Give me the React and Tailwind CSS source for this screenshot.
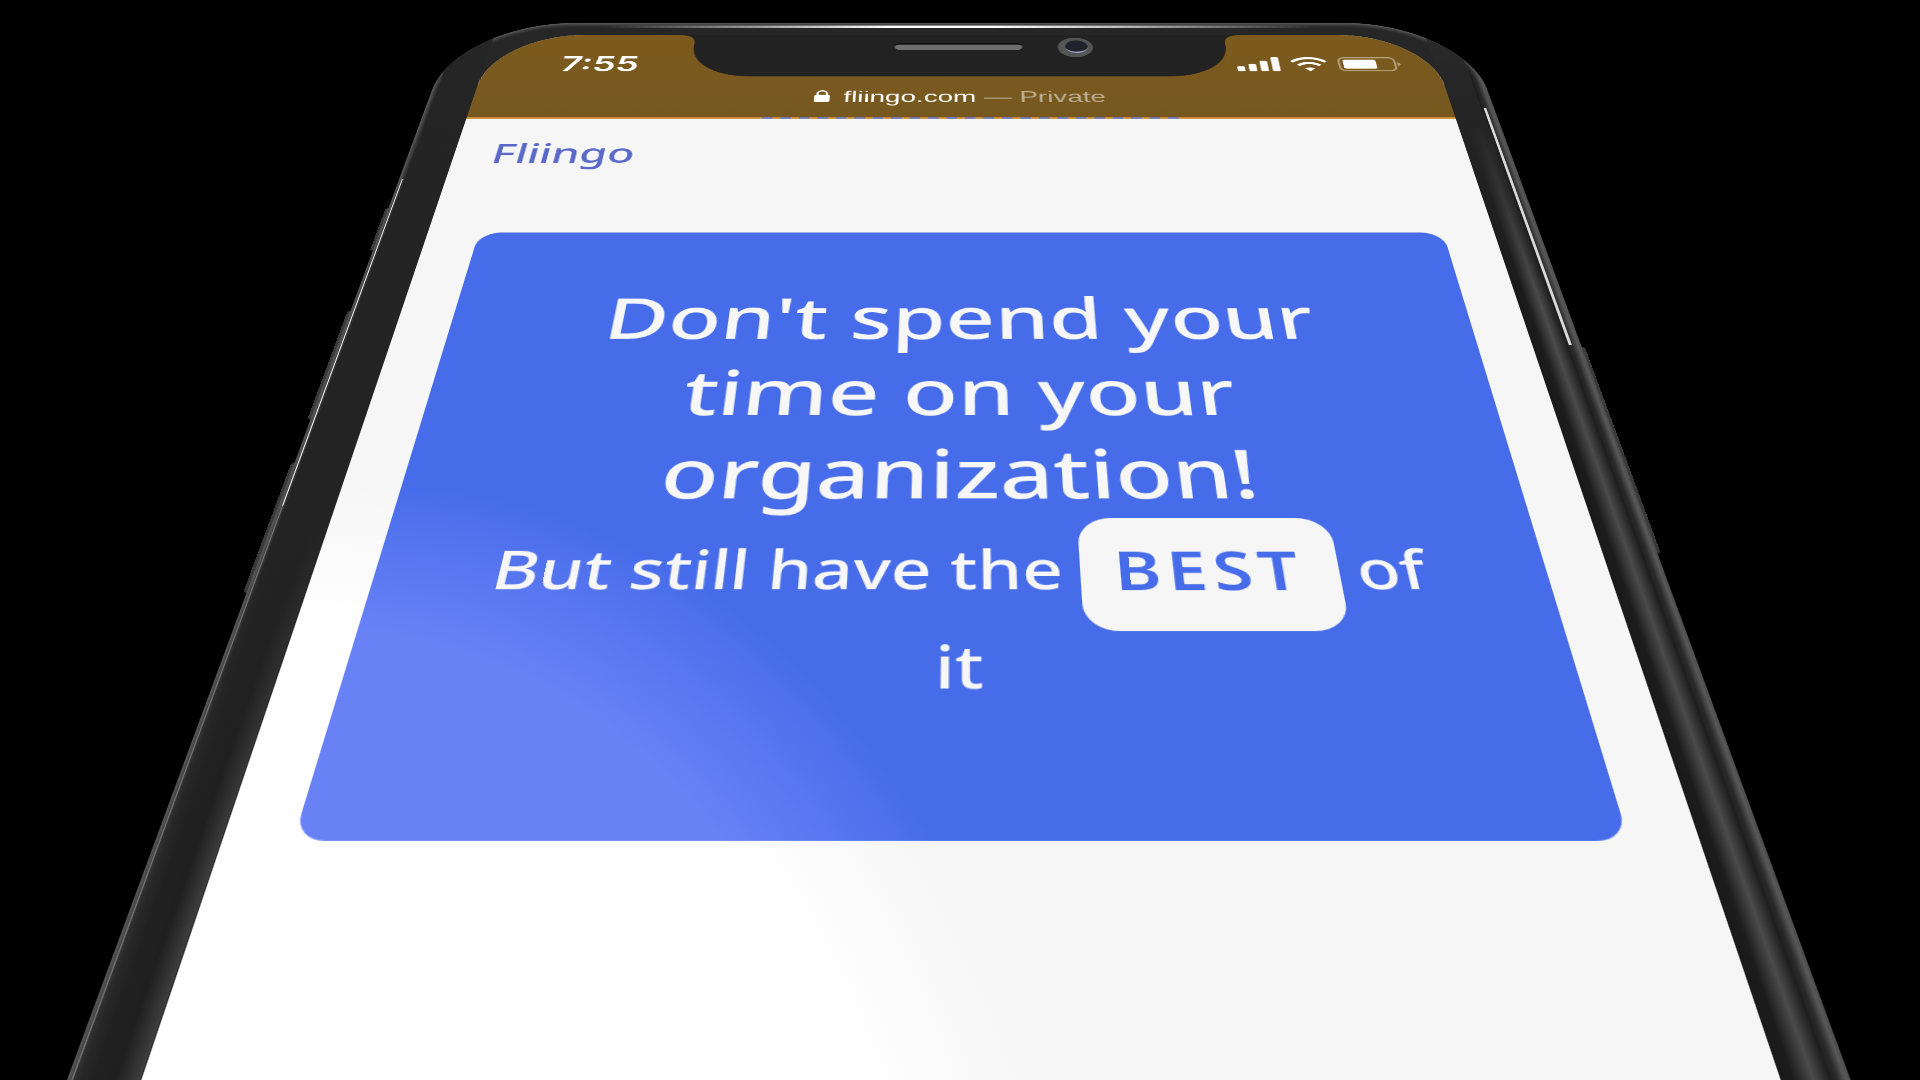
import React from 'react';

// status bar icons
function SignalIcon() {
  return (
    <svg width="17" height="10" viewBox="0 0 17 10" fill="#fff">
      <rect x="0" y="6.4" width="3" height="3.6" rx="0.7" />
      <rect x="4.6" y="4.8" width="3" height="5.2" rx="0.7" />
      <rect x="9.2" y="2.6" width="3" height="7.4" rx="0.7" />
      <rect x="13.8" y="0" width="3" height="10" rx="0.7" />
    </svg>
  );
}

function WifiIcon() {
  return (
    <svg width="15" height="10" viewBox="0 0 15 10" fill="none" stroke="#fff" strokeWidth="1.5">
      <path d="M0.8 3.4 A9.6 9.6 0 0 1 14.2 3.4" />
      <path d="M3.2 5.9 A6.2 6.2 0 0 1 11.8 5.9" />
      <path d="M5.5 7.9 Q7.5 6.7 9.5 7.9 L7.5 10 Z" fill="#fff" stroke="none" />
    </svg>
  );
}

function BatteryIcon() {
  return (
    <svg width="25" height="10" viewBox="0 0 25 10" fill="none">
      <rect x="0.4" y="0.4" width="22" height="9.2" rx="2.4" stroke="#b5a27c" strokeWidth="0.8" />
      <rect x="2" y="1.8" width="13" height="6.4" rx="1" fill="#fff" />
      <path d="M23.4 3.6 L24.8 5 L23.4 6.4 Z" fill="#b5a27c" />
    </svg>
  );
}

function LockIcon() {
  return (
    <svg width="6" height="8" viewBox="0 0 6 8" fill="#fff">
      <path d="M1.2 3.4 V2.2 A1.8 1.8 0 0 1 4.8 2.2 V3.4" fill="none" stroke="#fff" strokeWidth="0.8" />
      <rect x="0" y="3.2" width="6" height="4.8" rx="0.8" />
    </svg>
  );
}

function Notch() {
  return (
    <svg width="226" height="30" viewBox="0 0 226 30" fill="#222222">
      <path d="M0 0 Q7 0 7 6 V8 C7 20 17 29.5 31 29.5 H195 C209 29.5 219 20 219 8 V6 Q219 0 226 0 Z" />
    </svg>
  );
}

export default function App() {
  return (
    <div className="w-screen h-screen overflow-hidden bg-black">
      {/* whole phone sits on one tilted plane */}
      <div className="relative w-[408px] h-[480px] origin-top-left [transform:matrix3d(2.4878,0,0,0,-0.9474,1.3259,0,-0.0009858,0,0,1,0,460.8,23.07,0,1.00887)]">
        {/* side buttons */}
        <div className="absolute -left-[0.8px] top-[122px] w-[1px] h-[24px] rounded-l-[1px] bg-[#3a3a3a]" />
        <div className="absolute -left-[0.8px] top-[178px] w-[1px] h-[52px] rounded-l-[1px] bg-[#3a3a3a]" />
        <div className="absolute -left-[0.8px] top-[249px] w-[1px] h-[52px] rounded-l-[1px] bg-[#3a3a3a]" />
        <div className="absolute -right-[0.8px] top-[196px] w-[1px] h-[90px] rounded-r-[1px] bg-[#3a3a3a]" />

        <div className="relative h-full px-[16.5px] pt-[9px] rounded-t-[48px] overflow-hidden shadow-[inset_0_1px_3px_#6a6a6a] bg-[linear-gradient(90deg,#4a4a4a_0px,#2a2a2a_1.5px,#212121_6px,#1f1f1f_11px,#3c3c3c_16.5px,#262626_17px,#262626_391px,#191919_391.5px,#1c1c1c_395px,#4b4b4b_399.5px,#1e1e1e_403.5px,#242424_404px,#2a2a2a_405px,#555555_407px,#333333_408px)]">
          {/* bezel stays dark near the top, lighter band only comes in lower down */}
          <div className="absolute left-[1.5px] top-0 bottom-0 w-[15px] bg-[linear-gradient(180deg,#252525_0,#232323_270px,transparent_390px)]" />
          <div className="absolute right-[5px] top-0 bottom-0 w-[12px] bg-[linear-gradient(180deg,#2a2a2a_0,#242424_70px,transparent_170px)]" />

          {/* highlights along the frame */}
          <div className="absolute top-[1.5px] left-[60px] right-[60px] h-[2px] bg-[linear-gradient(90deg,transparent,#bdbdbd_28%,#ffffff_40%,#ffffff_55%,#bdbdbd_72%,transparent)]" />
          <div className="absolute left-[1px] top-[105px] w-[1px] h-[162px] bg-[linear-gradient(90deg,#ffffff_45%,transparent_45%)]" />
          <div className="absolute left-[1px] top-[267px] w-[1px] h-[213px] bg-[linear-gradient(90deg,#777777_40%,transparent_40%)]" />
          <div className="absolute right-[3.6px] top-[60px] w-[0.5px] h-[135px] bg-[#d8d8d8]" />
          <div className="absolute right-[3.6px] top-[289px] w-[0.5px] h-[191px] bg-[linear-gradient(180deg,#e8e8e8,#6d6d6d)]" />

          <div className="relative h-full rounded-t-[36px] overflow-hidden bg-[radial-gradient(ellipse_226px_312px_at_0px_560px,#ffffff_82%,#f6f6f6_100%)]">
            {/* status bar */}
            <div className="relative flex flex-col h-[58px] pt-[15.8px] bg-[linear-gradient(180deg,#7d5a1e,#76581f)] border-b-[0.5px] border-[#c98a30]">
              <div className="flex items-center justify-between h-[10px] pl-[30.5px] pr-[14px]">
                <span className="text-[14.5px] leading-[10px] font-semibold text-white [font-family:Inter,sans-serif]">7:55</span>
                <div className="flex items-center gap-[3.6px]">
                  <SignalIcon />
                  <WifiIcon />
                  <BatteryIcon />
                </div>
              </div>
              <div className="flex items-center justify-center gap-[5.5px] mt-[10.5px] text-[10.7px] leading-[14px] [font-family:'Liberation_Sans',sans-serif]">
                <LockIcon />
                <span className="text-white">fliingo.com <span className="text-[#bcae92]">— Private</span></span>
              </div>
              <div className="absolute left-[74px] top-0">
                <Notch />
              </div>
              <div className="absolute left-[161.5px] top-[6px] w-[51px] h-[5px] rounded-full bg-[#6e6e6e] border-t-[1px] border-[#0d0d0d]" />
              <div className="absolute left-[226.5px] top-[1.5px] w-[14px] h-[14px] rounded-full bg-[#555555] flex items-center justify-center">
                <div className="w-[9px] h-[9px] rounded-full bg-[#20232b] border-b-[1px] border-[#9aa4c0]" />
              </div>
              <div className="absolute left-[112px] w-[158px] -bottom-[0.5px] h-[0.5px] opacity-70 bg-[repeating-linear-gradient(90deg,#476cea_0px,#476cea_4px,transparent_4px,transparent_7px)]" />
            </div>

            {/* page */}
            <div className="h-[69px] pl-[14.5px] pt-[10px]">
              <span className="text-[16.5px] leading-[20px] font-medium text-[#5a68c8] [font-family:'Noto_Sans',sans-serif]">Fliingo</span>
            </div>

            <div className="mx-[18px] h-[246.5px] rounded-lg bg-[radial-gradient(ellipse_226px_312px_at_-18px_433px,#6881f5_82%,#476cea_100%)] pt-[27px] text-center text-[#f7f7f7] [font-family:'Noto_Sans',sans-serif]">
              <h1 className="px-[30px] text-[28.7px] leading-[36px] font-medium">Don't spend your time on your organization!</h1>
              <p className="mt-[1px] px-[30px] text-[20.6px] leading-[35.5px] font-medium">
                But still have the{' '}
                <span className="inline-block -mb-[5px] pt-[2.5px] pb-[5px] px-[9.5px] rounded-[10px] bg-[#f6f6f6] text-[#476cea] font-semibold tracking-[1.8px]">BEST</span>
                {' '}of it
              </p>
            </div>
          </div>
        </div>
      </div>
    </div>
  );
}
